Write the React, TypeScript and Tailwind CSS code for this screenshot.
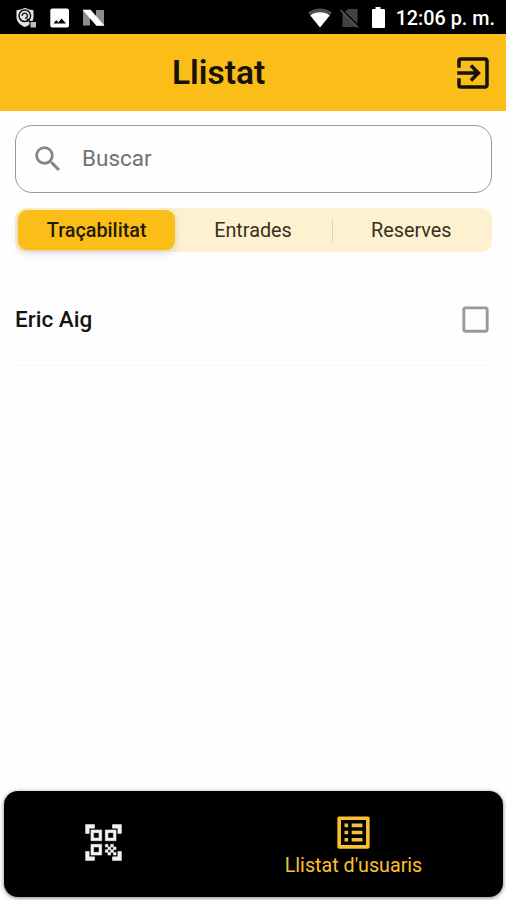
import React, { useState } from 'react';
import {
  MdCheckBox,
  MdCheckBoxOutlineBlank,
  MdExitToApp,
  MdListAlt,
  MdQrCodeScanner,
  MdSearch,
} from 'react-icons/md';

const TABS = ['Traçabilitat', 'Entrades', 'Reserves'];
const USERS = ['Eric Aig'];

const StatusBar: React.FC = () => (
  <div className="flex h-[34px] shrink-0 items-center justify-between bg-black pl-[15px] pr-[11px] pt-px text-white">
    <div className="flex items-center">
      <svg width="22" height="22" viewBox="0 0 22 22" fill="none">
        <path d="M10 .8q4 2.400 8.500 2.400v7c0 4.500-3.500 7.500-8.500 9.800C5 17.700 1.500 14.700 1.500 10.200v-7Q6 3.200 10 .8Z" fill="#e4e4e4" />
        <circle cx="9.800" cy="8.800" r="5.800" stroke="#111" strokeWidth="1.500" />
        <path d="M7.200 9a2.600 2.600 0 1 1 2.800 2.300" stroke="#111" strokeWidth="1.400" />
        <path d="m12 11.500 4.500 5" stroke="#111" strokeWidth="1.800" />
        <path d="M14.500 14H21v6.500h-6.500z" fill="#000" />
        <path d="M15.500 15H21v5.500h-5.500z" fill="#bdbdbd" />
      </svg>
      <svg className="ml-[13px]" width="20" height="20" viewBox="0 0 20 20">
        <rect x="0.300" y="0.500" width="18.700" height="19" rx="2" fill="#fff" />
        <path d="m3.500 15.500 2.800-3.500 2 2.500 3.200-4 4.500 5Z" fill="#000" />
      </svg>
      <svg className="ml-3" width="23" height="18" viewBox="0 0 23 18">
        <path d="M1 1.500 8 6v10.500H1ZM22 1v15.500l-8-4V1Z" fill="#8c8c8c" />
        <path d="M1 1h7.500L22 16.500h-7.500Z" fill="#fff" stroke="#fff" strokeWidth=".6" />
      </svg>
    </div>
    <div className="flex items-center">
      <svg width="26" height="20" viewBox="0 0 26 20">
        <path d="M1 4.500C8 -.8 18-.8 25 4.500L13 19.500Z" fill="#505050" />
        <path d="M3.300 7.500c5.500-4.200 13.900-4.200 19.400 0l-9.700 12Z" fill="#fff" />
      </svg>
      <svg className="ml-[7px]" width="20" height="20" viewBox="0 0 20 20">
        <path d="M8 1h9.500v18H2.500V6Z" fill="#424242" />
        <path d="M1.500 1.500 19.500 19.500" stroke="#000" strokeWidth="2" />
        <path d="M.5 2 18 19.500" stroke="#555" strokeWidth="1.600" />
      </svg>
      <svg className="ml-[11px]" width="15" height="22" viewBox="0 0 15 22">
        <path d="M4.500 0h5v2H13q1 0 1 1v17q0 1-1 1H2q-1 0-1-1V3q0-1 1-1h2.500Z" fill="#fff" />
      </svg>
      <span className="ml-[10px] mt-[3px] text-[19.8px] font-medium leading-6 whitespace-nowrap">12:06 p. m.</span>
    </div>
  </div>
);

const Header: React.FC = () => (
  <header className="flex h-[77px] shrink-0 items-center bg-[#fbbd17] pr-3 text-[#161205]">
    <h1 className="flex-1 pl-[172px] text-[33.5px] font-semibold leading-none">Llistat</h1>
    <button type="button" aria-label="Sortir">
      <MdExitToApp size={42} />
    </button>
  </header>
);

const SearchField: React.FC = () => (
  <label className="flex h-[68px] items-center rounded-[17px] border border-[#989898] pl-[15px]">
    <MdSearch size={34} className="shrink-0 text-[#858585]" />
    <input
      type="text"
      placeholder="Buscar"
      className="ml-[17px] min-w-0 flex-1 text-[22.5px] text-[#333] outline-none placeholder:text-[#727272]"
    />
  </label>
);

const App: React.FC = () => {
  const [activeTab, setActiveTab] = useState(0);
  const [checked, setChecked] = useState<string[]>([]);

  const toggleUser = (name: string) => {
    setChecked((prev) => (prev.includes(name) ? prev.filter((n) => n !== name) : [...prev, name]));
  };

  return (
    <div className="flex h-[900px] w-[506px] flex-col overflow-hidden bg-[#fefefe] font-[Roboto,sans-serif]">
      <StatusBar />
      <Header />

      <main className="flex-1 pl-[15px] pr-[14px] pt-[14px]">
        <SearchField />

        <div className="mt-[15px] flex h-[44px] items-center rounded-[10px] bg-[#fef1d0] pl-[3px] pr-[2px]">
          {TABS.map((tab, i) => (
            <React.Fragment key={tab}>
              {i > 0 && (
                <span className={`h-[23px] w-px shrink-0 ${activeTab === i || activeTab === i - 1 ? '' : 'bg-[#dcd3b8]'}`} />
              )}
              <button
                type="button"
                onClick={() => setActiveTab(i)}
                className={`h-[40px] flex-1 basis-0 rounded-[9px] pt-px text-[19.8px] leading-none ${
                  activeTab === i
                    ? '-mr-[2px] bg-[#fbbd17] font-medium text-[#241b05] shadow-[0_3px_8px_rgba(0,0,0,0.14)]'
                    : 'text-[#35301f]'
                }`}
              >
                {tab}
              </button>
            </React.Fragment>
          ))}
        </div>

        <ul className="mt-[22px]">
          {USERS.map((name) => (
            <li key={name} className="flex h-[92px] items-center justify-between border-b border-[#f7f7f7]">
              <span className="text-[22.5px] font-medium text-[#141414]">{name}</span>
              <button type="button" aria-label={name} onClick={() => toggleUser(name)} className="-mr-px text-[#999]">
                {checked.includes(name) ? <MdCheckBox size={35} /> : <MdCheckBoxOutlineBlank size={35} />}
              </button>
            </li>
          ))}
        </ul>
      </main>

      <nav className="ml-1 mr-[3px] mb-[3px] flex h-[106px] shrink-0 rounded-[14px] bg-black shadow-[0_1px_4px_rgba(0,0,0,0.5)]">
        <button type="button" aria-label="Escanejar" className="flex w-[198px] items-center justify-center pb-[3px] text-[#f2f2f2]">
          <MdQrCodeScanner size={43} strokeWidth={0.3} className="stroke-current [&>*:first-child]:stroke-none" />
        </button>
        <button type="button" className="flex flex-1 flex-col items-center pl-[2px] pt-[20px] text-[#fbc02d]">
          <MdListAlt size={43} />
          <span className="text-[19.7px] leading-6">Llistat d'usuaris</span>
        </button>
      </nav>
    </div>
  );
};

export default App;
